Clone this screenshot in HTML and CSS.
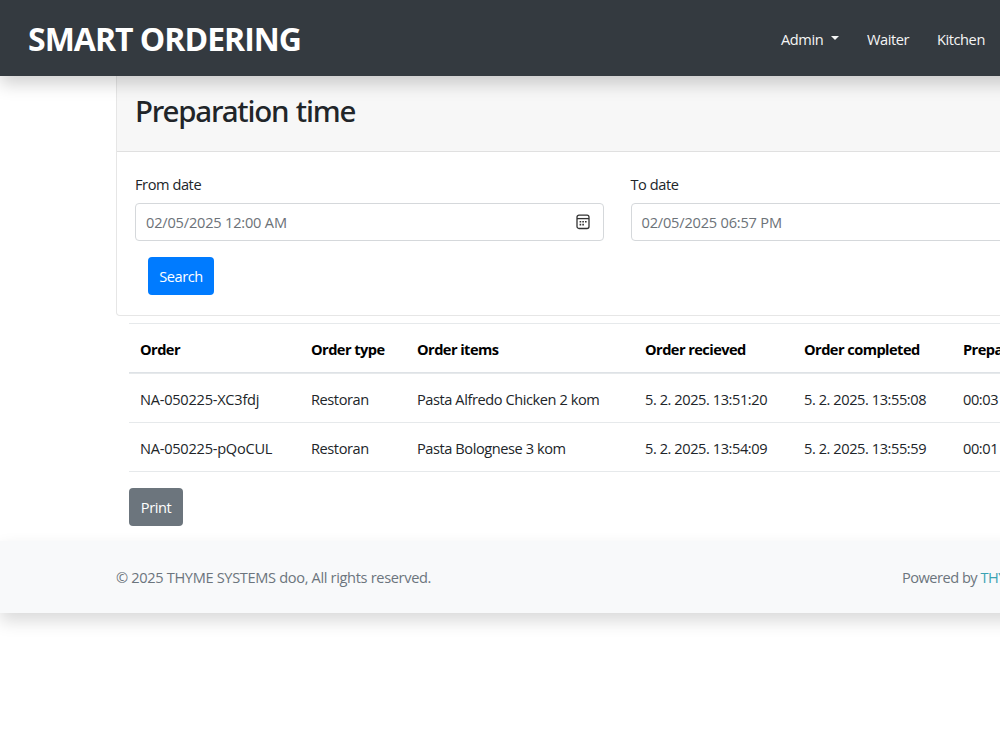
FILE: index.html
```
<!DOCTYPE html>
<html lang="en">
<head>
    <meta charset="utf-8">
    <title>Preparation time</title>
    <link rel="stylesheet" href="styles.css">
</head>
<body>
    <div class="page">
        <header class="navbar">
            <a class="brand" href="#">SMART ORDERING</a>
            <nav class="menu">
                <a class="dropdown" href="#">Admin</a>
                <a class="waiter" href="#">Waiter</a>
                <a class="kitchen" href="#">Kitchen</a>
            </nav>
        </header>

        <main class="container">
            <div class="card">
                <div class="card-header">
                    <h2>Preparation time</h2>
                </div>
                <div class="card-body">
                    <div class="row">
                        <div class="col">
                            <label>From date</label>
                            <div class="input">
                                <span>02/05/2025 12:00 AM</span>
                                <svg class="calendar" viewBox="0 0 14 16" width="14" height="16">
                                    <rect x="1" y="1.2" width="12" height="13.3" rx="2" fill="none" stroke="#333" stroke-width="1.3"/>
                                    <path d="M1 4.6h12" stroke="#333" stroke-width="1.3"/>
                                    <path d="M3.6 7.7h1.6M6.3 7.7h1.6M9 7.7h1.6M3.6 10.6h1.6M6.3 10.6h1.6" stroke="#333" stroke-width="1.6"/>
                                </svg>
                            </div>
                        </div>
                        <div class="col">
                            <label>To date</label>
                            <div class="input">
                                <span>02/05/2025 06:57 PM</span>
                            </div>
                        </div>
                    </div>
                    <button class="btn btn-search">Search</button>
                </div>
            </div>

            <div class="orders">
                <table>
                    <colgroup>
                        <col class="c-order">
                        <col class="c-type">
                        <col class="c-items">
                        <col class="c-date">
                        <col class="c-date">
                        <col>
                    </colgroup>
                    <thead>
                        <tr>
                            <th>Order</th>
                            <th>Order type</th>
                            <th>Order items</th>
                            <th>Order recieved</th>
                            <th>Order completed</th>
                            <th>Preparation time</th>
                        </tr>
                    </thead>
                    <tbody>
                        <tr>
                            <td class="code">NA-050225-XC3fdj</td>
                            <td>Restoran</td>
                            <td>Pasta Alfredo Chicken 2 kom</td>
                            <td>5. 2. 2025. 13:51:20</td>
                            <td>5. 2. 2025. 13:55:08</td>
                            <td>00:03</td>
                        </tr>
                        <tr>
                            <td class="code">NA-050225-pQoCUL</td>
                            <td>Restoran</td>
                            <td>Pasta Bolognese 3 kom</td>
                            <td>5. 2. 2025. 13:54:09</td>
                            <td>5. 2. 2025. 13:55:59</td>
                            <td>00:01</td>
                        </tr>
                    </tbody>
                </table>
                <button class="btn btn-print">Print</button>
            </div>
        </main>

        <footer class="footer">
            <span>&copy; 2025 THYME SYSTEMS doo, All rights reserved.</span>
            <span class="powered">Powered by <a href="#">THYME SYSTEMS</a></span>
        </footer>
    </div>
</body>
</html>
```

FILE: styles.css
```
* {
    box-sizing: border-box;
}

html {
    background: #fff;
}

body {
    height: 100vh;
    margin: 0;
    overflow-x: hidden;
    overflow-y: hidden;
    color: #212529;
    font-family: "Open Sans", "Noto Sans", sans-serif;
    font-size: 14.6px;
    letter-spacing: -0.43px;
    line-height: 24px;
}

a {
    text-decoration: none;
}

.page {
    width: 1234px;
    min-height: 100vh;
}

/* Navbar */
.navbar {
    position: relative;
    display: flex;
    align-items: center;
    height: 76px;
    padding-left: 28px;
    background: #343a40;
    box-shadow: 0 8px 16px rgba(0, 0, 0, 0.18);
}

.brand {
    width: 753px;
    padding-top: 2px;
    color: #fff;
    font-size: 32px;
    font-weight: bold;
    letter-spacing: -1px;
    line-height: 40px;
}

.menu {
    display: flex;
    padding-top: 2px;
}

.menu a {
    color: #f4f5f5;
    white-space: nowrap;
}

.dropdown {
    width: 86px;
}

.dropdown::after {
    content: "";
    display: inline-block;
    margin-left: 8px;
    vertical-align: 5px;
    border-top: 4px solid;
    border-right: 4px solid transparent;
    border-left: 4px solid transparent;
}

.waiter {
    width: 70px;
}

/* Search card */
.container {
    width: 1002px;
    margin: 0 auto;
}

.card {
    height: 240px;
    border: 1px solid #e6e6e6;
    border-top: 0;
    border-radius: 0 0 4px 4px;
}

.card-header {
    height: 76px;
    padding: 15px 18px;
    background: #f7f7f7;
    border-bottom: 1px solid #e0e0e0;
}

h2 {
    margin: 0;
    font-family: "Noto Sans", sans-serif;
    font-size: 29.5px;
    font-weight: 500;
    letter-spacing: -1.2px;
    line-height: 40px;
    word-spacing: 1px;
}

.card-body {
    padding: 20px 18px;
}

.row {
    display: flex;
    gap: 27px;
}

.col {
    flex: 1;
}

label {
    display: block;
    margin-bottom: 7px;
}

.input {
    display: flex;
    align-items: center;
    justify-content: space-between;
    height: 38px;
    padding: 0 13px 0 10px;
    border: 1px solid #d5d8db;
    border-radius: 4px;
    color: #6c7278;
    letter-spacing: -0.2px;
}

.btn {
    display: block;
    height: 38px;
    padding: 0;
    border: 0;
    border-radius: 4px;
    color: #fff;
    font: inherit;
    letter-spacing: inherit;
    text-align: center;
}

.btn-search {
    width: 66px;
    margin: 16px 0 0 13px;
    background: #007bff;
}

/* Orders table */
.orders {
    padding: 7px 13px 0;
}

table {
    width: 100%;
    table-layout: fixed;
    border-collapse: separate;
    border-spacing: 0;
}

th, td {
    height: 49px;
    padding: 1px 0 0 11px;
    border-top: 1px solid #e6e9eb;
    text-align: left;
    white-space: nowrap;
}

th {
    height: 50px;
    border-bottom: 1px solid #dee2e6;
    color: #000;
    letter-spacing: -0.55px;
}

tbody tr:last-child td {
    height: 50px;
    border-bottom: 1px solid #e6e9eb;
}

.code {
    letter-spacing: -0.25px;
}

.c-order {
    width: 171px;
}

.c-type {
    width: 106px;
}

.c-items {
    width: 228px;
}

.c-date {
    width: 159px;
}

.btn-print {
    width: 54px;
    margin-top: 16px;
    background: #6c757d;
}

/* Footer */
.footer {
    position: relative;
    display: flex;
    justify-content: space-between;
    height: 72px;
    margin-top: 15px;
    padding: 24px 116px;
    background: #f8f9fa;
    box-shadow: 0 8px 16px rgba(0, 0, 0, 0.15);
    color: #6c757d;
    letter-spacing: -0.34px;
}

.powered {
    width: 216px;
    letter-spacing: -0.5px;
    white-space: nowrap;
}

.powered a {
    color: #3aa3b3;
}
```
